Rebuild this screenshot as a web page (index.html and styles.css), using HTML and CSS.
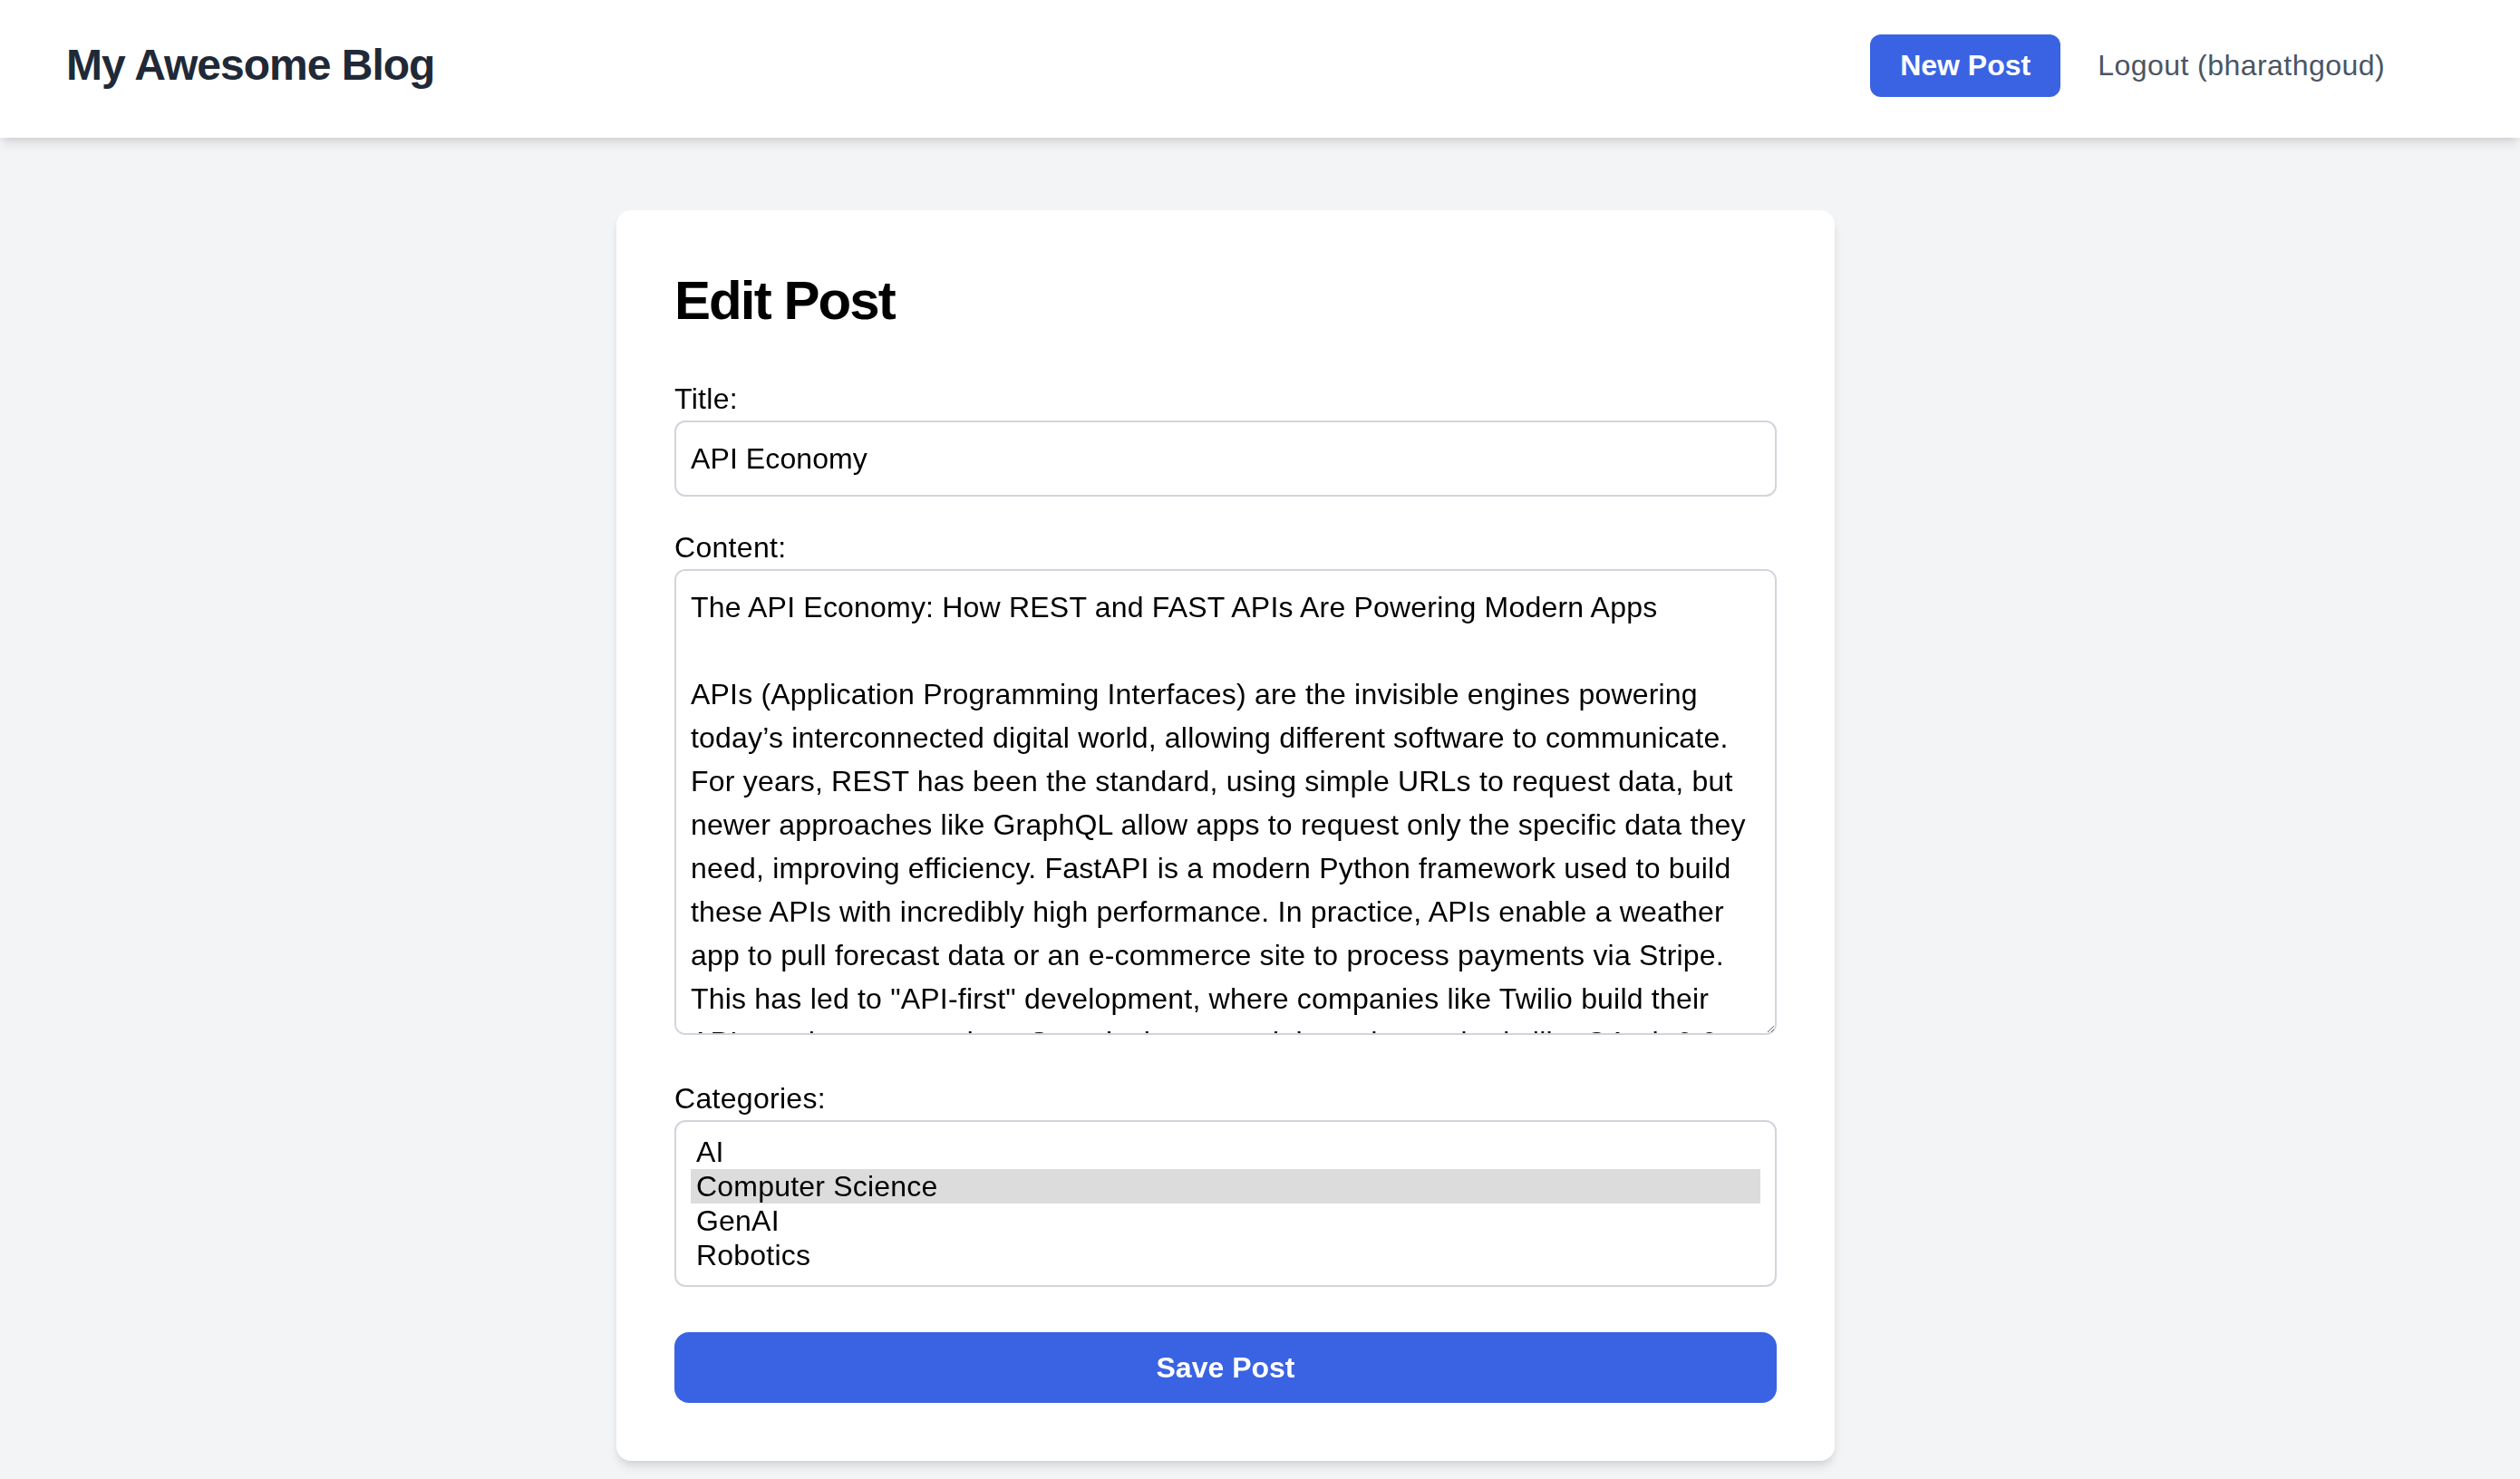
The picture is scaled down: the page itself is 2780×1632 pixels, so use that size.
FILE: index.html
```html
<!DOCTYPE html>
<html lang="en">
<head>
<meta charset="utf-8">
<title>Edit Post - My Awesome Blog</title>
<link rel="stylesheet" href="styles.css">
</head>
<body>
<header class="site-header">
  <a class="brand" href="#">My Awesome Blog</a>
  <nav class="nav">
    <a class="btn-new" href="#">New Post</a>
    <a class="logout" href="#">Logout (bharathgoud)</a>
  </nav>
</header>
<main class="page">
  <section class="card">
    <h1 class="card-title">Edit Post</h1>
    <form class="post-form">
      <div class="field">
        <label class="field-label" for="title">Title:</label>
        <input class="text-input" id="title" type="text" value="API Economy">
      </div>
      <div class="field field-textarea">
        <label class="field-label" for="content">Content:</label>
        <textarea class="text-area" id="content" rows="10">The API Economy: How REST and FAST APIs Are Powering Modern Apps

APIs (Application Programming Interfaces) are the invisible engines powering today’s interconnected digital world, allowing different software to communicate. For years, REST has been the standard, using simple URLs to request data, but newer approaches like GraphQL allow apps to request only the specific data they need, improving efficiency. FastAPI is a modern Python framework used to build these APIs with incredibly high performance. In practice, APIs enable a weather app to pull forecast data or an e-commerce site to process payments via Stripe. This has led to "API-first" development, where companies like Twilio build their APIs as the core product. Security is ensured through standards like OAuth 2.0, keeping data safe as it moves between services.</textarea>
      </div>
      <div class="field field-select">
        <label class="field-label">Categories:</label>
        <div class="listbox" role="listbox" aria-multiselectable="true">
          <div class="option" role="option">AI</div>
          <div class="option is-selected" role="option" aria-selected="true">Computer Science</div>
          <div class="option" role="option">GenAI</div>
          <div class="option" role="option">Robotics</div>
        </div>
      </div>
      <button class="btn-save" type="button">Save Post</button>
    </form>
  </section>
</main>
</body>
</html>
```

FILE: styles.css
```css
* { box-sizing: border-box; }

html, body {
  margin: 0;
  padding: 0;
}

body {
  background: #f3f4f6;
  font-family: "Liberation Sans", Arial, sans-serif;
  color: #000;
  min-height: 1632px;
}

a { text-decoration: none; }

.site-header {
  height: 152px;
  background: #fff;
  display: flex;
  align-items: center;
  justify-content: space-between;
  padding: 0 149px 8px 73px;
  box-shadow: 0 8px 12px -2px rgba(0,0,0,0.10), 0 4px 8px -4px rgba(0,0,0,0.10);
  position: relative;
  z-index: 1;
}

.brand {
  font-size: 48px;
  font-weight: 700;
  letter-spacing: -1px;
  color: #1f2937;
  line-height: 64px;
}

.nav {
  display: flex;
  align-items: center;
  gap: 41px;
}

.btn-new {
  display: block;
  height: 69px;
  line-height: 69px;
  padding: 0 33px;
  background: #3a63e3;
  color: #fff;
  font-size: 32px;
  font-weight: 700;
  border-radius: 12px;
}

.logout {
  font-size: 32px;
  color: #4b5563;
  line-height: 48px;
  letter-spacing: 0.45px;
}

.page {
  display: flex;
  justify-content: center;
  padding: 80px 76px 0 0;
}

.card {
  width: 1344px;
  background: #fff;
  border-radius: 16px;
  padding: 64px;
  box-shadow: 0 8px 12px -2px rgba(0,0,0,0.10), 0 4px 8px -4px rgba(0,0,0,0.10);
}

.card-title {
  margin: 0 0 48px;
  font-size: 60px;
  line-height: 72px;
  font-weight: 700;
  letter-spacing: -1.9px;
  color: #000;
}

.post-form { display: block; }

.field { margin-bottom: 32px; }

.field-textarea { margin-bottom: 46px; }

.field-select { margin-bottom: 50px; }

.field-label {
  display: block;
  font-size: 32px;
  line-height: 48px;
  letter-spacing: 0.3px;
  color: #000;
}

.text-input {
  display: block;
  width: 100%;
  height: 84px;
  padding: 0 16px;
  border: 2px solid #d1d5db;
  border-radius: 12px;
  font-family: inherit;
  font-size: 32px;
  letter-spacing: 0.1px;
  color: #000;
  background: #fff;
  outline: none;
}

.text-area {
  display: block;
  width: 100%;
  height: 514px;
  padding: 16px;
  border: 2px solid #d1d5db;
  border-radius: 12px;
  font-family: inherit;
  font-size: 32px;
  line-height: 48px;
  letter-spacing: 0.2px;
  color: #000;
  background: #fff;
  outline: none;
  resize: vertical;
  scrollbar-width: none;
}

.listbox {
  border: 2px solid #d1d5db;
  border-radius: 12px;
  padding: 14px 16px;
  background: #fff;
}

.option {
  height: 38px;
  line-height: 38px;
  padding: 0 6px;
  font-size: 32px;
  letter-spacing: 0.2px;
  color: #000;
}

.option.is-selected { background: #dcdcdc; }

.btn-save {
  display: block;
  width: 100%;
  height: 78px;
  border: 0;
  border-radius: 16px;
  background: #3a63e3;
  color: #fff;
  font-family: inherit;
  font-size: 32px;
  font-weight: 700;
  cursor: pointer;
}
```
